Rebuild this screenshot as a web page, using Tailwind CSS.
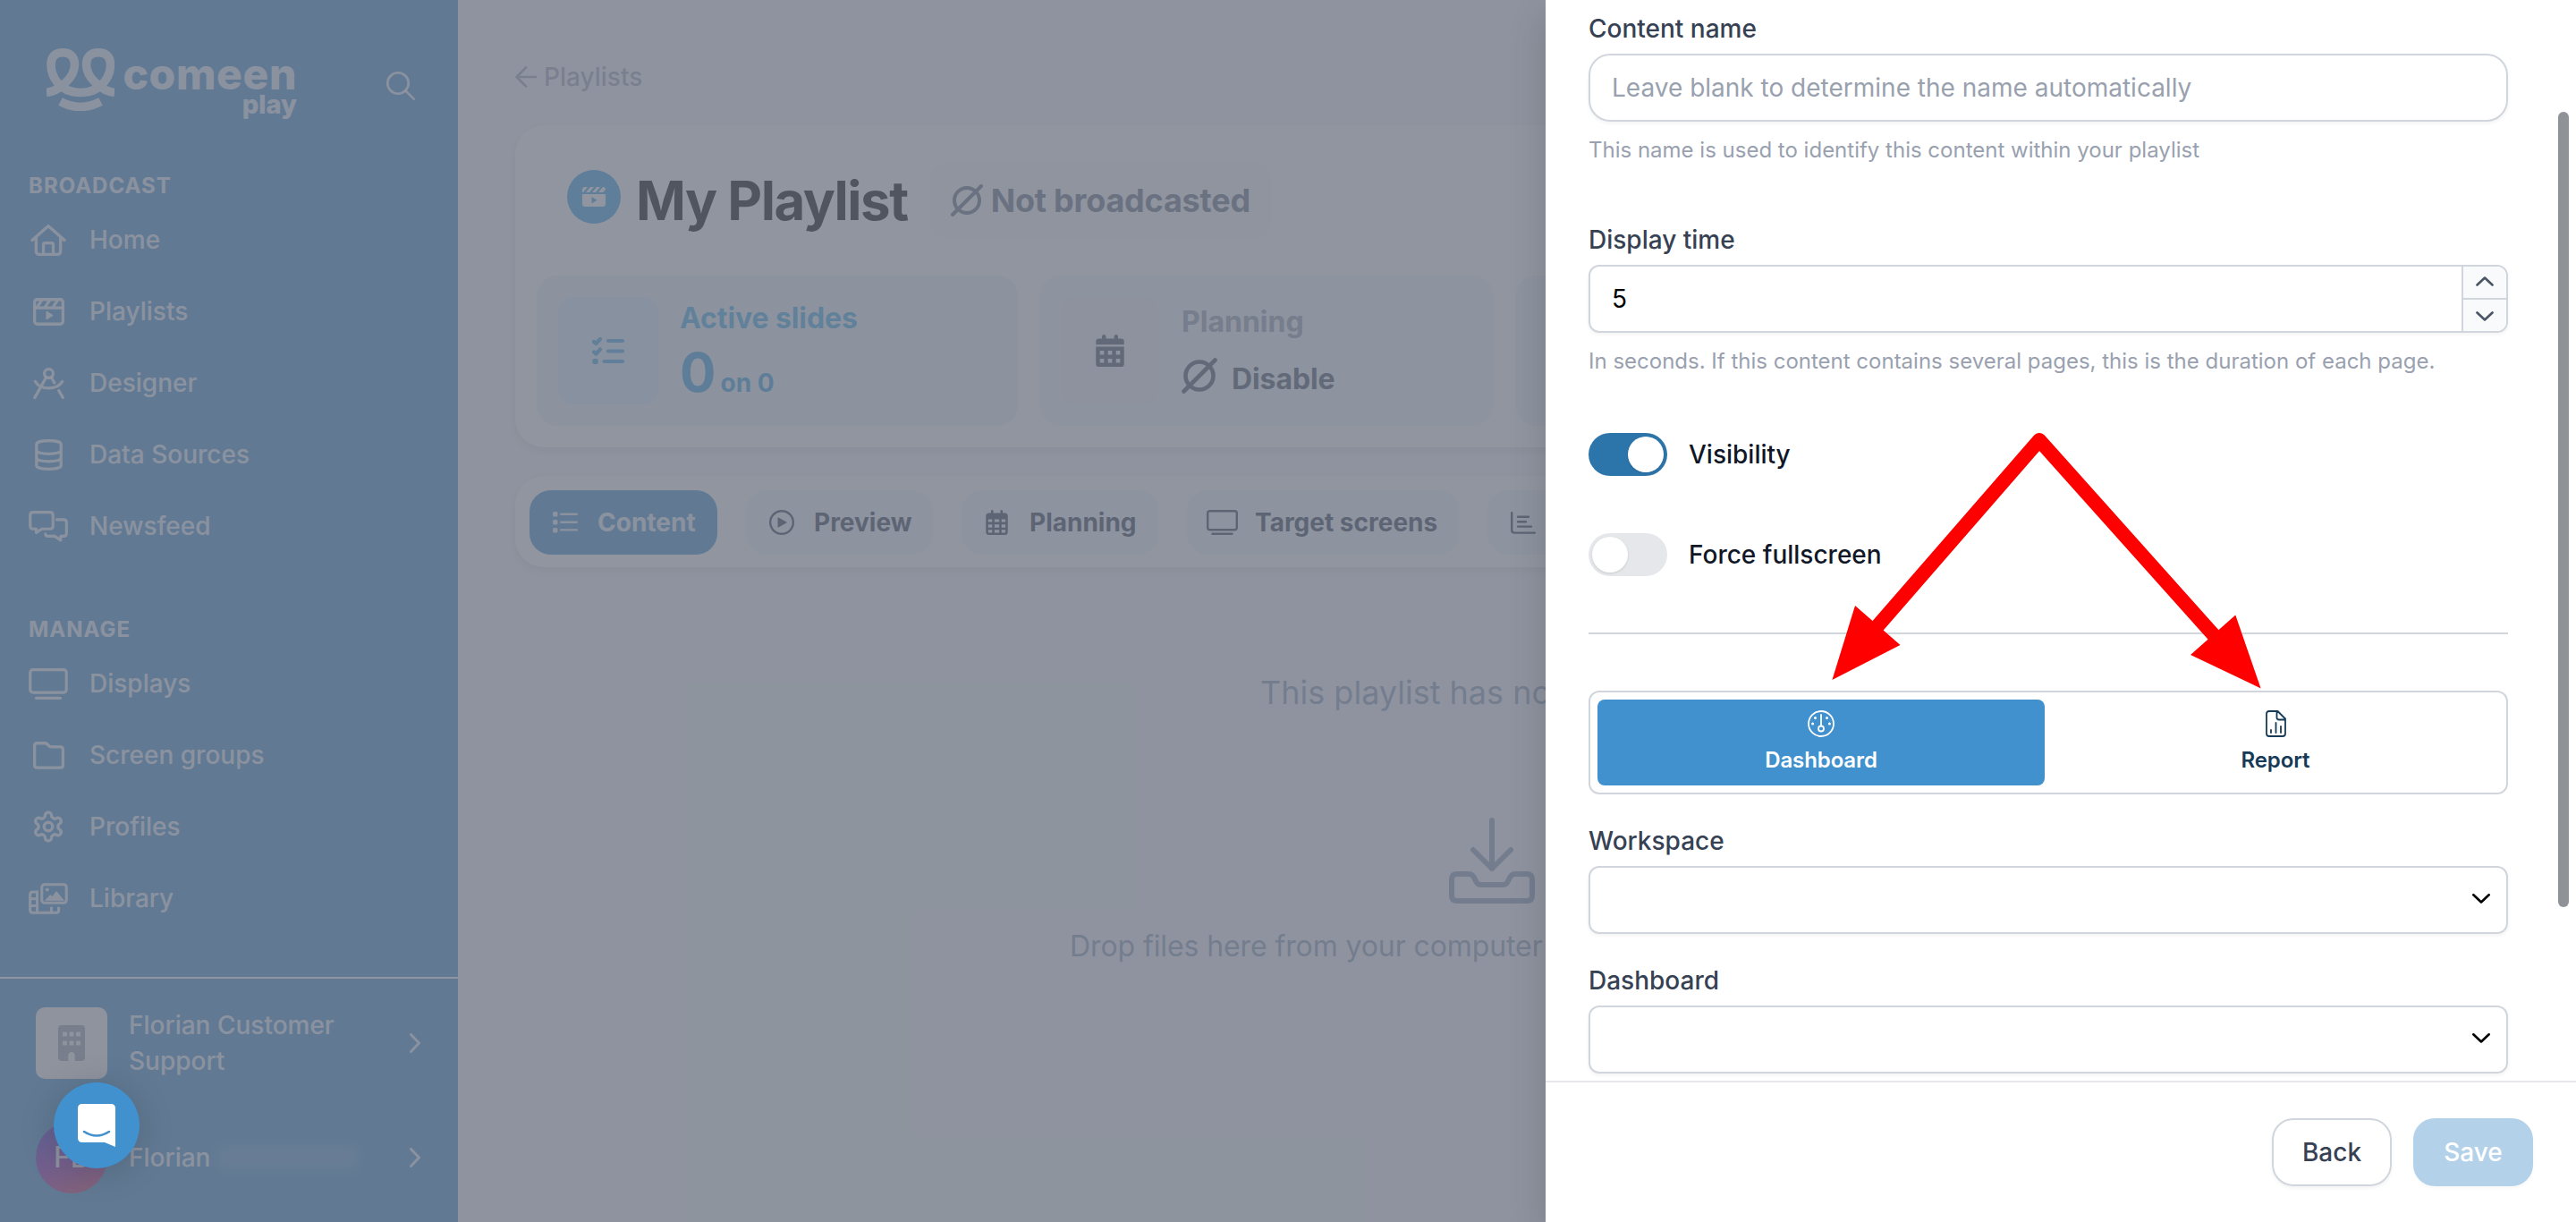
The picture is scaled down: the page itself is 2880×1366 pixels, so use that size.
<!DOCTYPE html>
<html lang="en">
<head>
    <meta charset="UTF-8" />
    <title>My Playlist - Comeen Play</title>
    <script src="https://cdn.jsdelivr.net/npm/@tailwindcss/browser@4"></script>
</head>
<body class="relative h-[1366px] w-[2880px] overflow-hidden bg-[#f7f8fa] font-['Inter',sans-serif] text-[28px] leading-10">
    <div class="flex h-full">

        <!-- Sidebar -->
        <aside class="flex w-[512px] shrink-0 flex-col bg-[#4590cc] font-medium text-white/90">
            <div class="flex h-[188px] items-start pl-[52px] pt-[54px]">
                <svg class="h-[70px] w-[76px] shrink-0" viewBox="0 0 76 70" fill="none" stroke="currentColor" stroke-width="9.5">
                    <path d="M0 49.5C14 48 31.5 33 31.5 18C31.5 9 26 4.8 18 4.8C10 4.8 5 9 5 18C5 31 14 49.5 38 49.5C62 49.5 71.5 31 71.5 18C71.5 9 66 4.8 58 4.8C50 4.8 44.5 9 44.5 18C44.5 33 62 48 76 49.5"/>
                    <path d="M15.5 59.5Q38 71.5 60.5 59.5"/>
                </svg>
                <div class="ml-2 mt-[10px] w-[196px] text-right font-extrabold">
                    <div class="text-[48px] leading-[38px] tracking-[0.6px]">comeen</div>
                    <div class="text-[29px] leading-[30px]">play</div>
                </div>
                <svg class="ml-[100px] mt-[26px] size-8" viewBox="0 0 32 32" fill="none" stroke="currentColor" stroke-width="2.6" stroke-linecap="round">
                    <circle cx="13" cy="13" r="11.7"/>
                    <path d="M21.5 21.5L30.7 30.7"/>
                </svg>
            </div>

            <h2 class="h-10 pl-8 text-2xl leading-[39px] font-bold tracking-[1px]">BROADCAST</h2>
            <nav class="mb-14">
                <a class="flex h-20 items-center gap-6 pl-8">
                    <span class="flex w-11 justify-center">
                        <svg class="h-[35px] w-10" viewBox="0 0 576 512" fill="none" stroke="currentColor" stroke-width="48" stroke-linecap="round" stroke-linejoin="round">
                            <path d="M24 256L288 24L552 256M88 206V432q0 56 56 56H432q56 0 56-56V206M208 484V328q0-26 26-26h108q26 0 26 26V484"/>
                        </svg>
                    </span>
                    Home
                </a>
                <a class="flex h-20 items-center gap-6 pl-8">
                    <span class="flex w-11 justify-center">
                        <svg class="size-[35px]" viewBox="0 0 512 512" fill="none" stroke="currentColor" stroke-width="48" stroke-linejoin="round">
                            <rect x="24" y="55" width="464" height="402" rx="44"/>
                            <path d="M24 192H488M66 182L140 66M196 182L270 66M326 182L400 66"/>
                            <path d="M220 252V376L318 314Z" fill="currentColor" stroke-width="16"/>
                        </svg>
                    </span>
                    Playlists
                </a>
                <a class="flex h-20 items-center gap-6 pl-8">
                    <span class="flex w-11 justify-center">
                        <svg class="size-[35px]" viewBox="0 0 512 512" fill="none" stroke="currentColor" stroke-width="48" stroke-linecap="round">
                            <circle cx="256" cy="96" r="72"/>
                            <path d="M214 158L28 488M298 158L348 246M422 376L486 488M36 226C120 372 392 372 478 226"/>
                        </svg>
                    </span>
                    Designer
                </a>
                <a class="flex h-20 items-center gap-6 pl-8">
                    <span class="flex w-11 justify-center">
                        <svg class="h-[35px] w-[31px]" viewBox="0 0 448 512" fill="none" stroke="currentColor" stroke-width="48">
                            <path d="M24 80C24 6 424 6 424 80V432C424 506 24 506 24 432ZM24 188C60 256 388 256 424 188M24 312C60 380 388 380 424 312"/>
                        </svg>
                    </span>
                    Data Sources
                </a>
                <a class="flex h-20 items-center gap-6 pl-8">
                    <span class="flex w-11 justify-center">
                        <svg class="h-[35px] w-11" viewBox="0 0 640 512" fill="none" stroke="currentColor" stroke-width="46" stroke-linecap="round" stroke-linejoin="round">
                            <path d="M70 24H350q46 0 46 46V250q0 46-46 46H216L124 356V296H70q-46 0-46-46V70q0-46 46-46Z"/>
                            <path d="M456 144H572q46 0 46 46V370q0 46-46 46H522V480L424 416H320q-46 0-46-40"/>
                        </svg>
                    </span>
                    Newsfeed
                </a>
            </nav>

            <h2 class="h-10 pl-8 text-2xl leading-[39px] font-bold tracking-[1px]">MANAGE</h2>
            <nav>
                <a class="flex h-20 items-center gap-6 pl-8">
                    <svg class="h-[35px] w-11" viewBox="0 0 640 512" fill="none" stroke="currentColor" stroke-width="46" stroke-linecap="round">
                        <rect x="24" y="24" width="592" height="372" rx="44"/>
                        <path d="M122 488H518"/>
                    </svg>
                    Displays
                </a>
                <a class="flex h-20 items-center gap-6 pl-8">
                    <span class="flex w-11 justify-center">
                        <svg class="size-[35px]" viewBox="0 0 512 512" fill="none" stroke="currentColor" stroke-width="48" stroke-linejoin="round">
                            <path d="M66 55H196q20 0 34 14L262 100q14 14 34 14H446q42 0 42 42V414q0 42-42 42H66q-42 0-42-42V97q0-42 42-42Z"/>
                        </svg>
                    </span>
                    Screen groups
                </a>
                <a class="flex h-20 items-center gap-6 pl-8">
                    <span class="flex w-11 justify-center">
                        <svg class="size-[38px]" viewBox="0 0 24 24" fill="none" stroke="currentColor" stroke-width="2.1" stroke-linecap="round" stroke-linejoin="round">
                            <path d="M12.22 2h-.44a2 2 0 0 0-2 2v.18a2 2 0 0 1-1 1.73l-.43.25a2 2 0 0 1-2 0l-.15-.08a2 2 0 0 0-2.73.73l-.22.38a2 2 0 0 0 .73 2.73l.15.1a2 2 0 0 1 1 1.72v.51a2 2 0 0 1-1 1.74l-.15.09a2 2 0 0 0-.73 2.73l.22.38a2 2 0 0 0 2.73.73l.15-.08a2 2 0 0 1 2 0l.43.25a2 2 0 0 1 1 1.73V20a2 2 0 0 0 2 2h.44a2 2 0 0 0 2-2v-.18a2 2 0 0 1 1-1.73l.43-.25a2 2 0 0 1 2 0l.15.08a2 2 0 0 0 2.73-.73l.22-.39a2 2 0 0 0-.73-2.73l-.15-.08a2 2 0 0 1-1-1.74v-.5a2 2 0 0 1 1-1.74l.15-.09a2 2 0 0 0 .73-2.73l-.22-.38a2 2 0 0 0-2.73-.73l-.15.08a2 2 0 0 1-2 0l-.43-.25a2 2 0 0 1-1-1.73V4a2 2 0 0 0-2-2z"/>
                            <circle cx="12" cy="12" r="3"/>
                        </svg>
                    </span>
                    Profiles
                </a>
                <a class="flex h-20 items-center gap-6 pl-8">
                    <svg class="h-[35px] w-11" viewBox="0 0 640 512" fill="none" stroke="currentColor" stroke-width="44" stroke-linejoin="round">
                        <rect x="214" y="24" width="402" height="302" rx="44"/>
                        <path d="M270 286L350 196L386 226L452 140L574 286Z" fill="currentColor" stroke-width="10"/>
                        <circle cx="302" cy="110" r="30" fill="currentColor" stroke="none"/>
                        <path d="M160 148H66q-44 0-44 44V444q0 44 44 44H448q42 0 42-42V392M138 148V488M24 258H138M24 374H138M370 392V488"/>
                    </svg>
                    Library
                </a>
            </nav>

            <!-- Account -->
            <div class="mt-auto h-[274px] border-t-2 border-white/95 pl-10 pr-[42px] pt-8">
                <div class="flex h-20 items-center">
                    <span class="flex size-20 items-center justify-center rounded-[10px] bg-[#f5f5f8] text-[#a0a3b0]">
                        <svg class="h-10 w-[30px]" viewBox="0 0 384 512" fill="currentColor">
                            <path fill-rule="evenodd" d="M48 0C21.5 0 0 21.5 0 48V464c0 26.5 21.5 48 48 48h96V432c0-26.5 21.5-48 48-48s48 21.5 48 48v80h96c26.5 0 48-21.5 48-48V48c0-26.5-21.5-48-48-48H48zM80 224h32q16 0 16 16v32q0 16-16 16H80q-16 0-16-16v-32q0-16 16-16zm96 0h32q16 0 16 16v32q0 16-16 16h-32q-16 0-16-16v-32q0-16 16-16zm96 0h32q16 0 16 16v32q0 16-16 16h-32q-16 0-16-16v-32q0-16 16-16zM80 96h32q16 0 16 16v32q0 16-16 16H80q-16 0-16-16v-32q0-16 16-16zm96 0h32q16 0 16 16v32q0 16-16 16h-32q-16 0-16-16v-32q0-16 16-16zm96 0h32q16 0 16 16v32q0 16-16 16h-32q-16 0-16-16v-32q0-16 16-16z"/>
                        </svg>
                    </span>
                    <span class="ml-6 w-[240px]">Florian Customer Support</span>
                    <svg class="ml-auto h-[22px] w-3" viewBox="0 0 12 22" fill="none" stroke="currentColor" stroke-width="3" stroke-linecap="round" stroke-linejoin="round"><path d="M1.5 1.5L10.5 11L1.5 20.5"/></svg>
                </div>
                <div class="mt-12 flex h-20 items-center">
                    <span class="flex size-20 items-center rounded-full bg-linear-[160deg] from-[#5a2fc0] from-20% via-[#8a28b8] via-50% to-[#d43a58] pl-5 text-[32px]">FB</span>
                    <span class="ml-6">Florian</span>
                    <span class="ml-2 h-7 w-[158px] bg-white/15 blur-[6px]"></span>
                    <svg class="ml-auto h-[22px] w-3" viewBox="0 0 12 22" fill="none" stroke="currentColor" stroke-width="3" stroke-linecap="round" stroke-linejoin="round"><path d="M1.5 1.5L10.5 11L1.5 20.5"/></svg>
                </div>
            </div>
        </aside>

        <!-- Main content -->
        <main class="flex min-w-0 flex-1 flex-col pl-16 pr-[120px] pt-[66px]">
            <a class="flex h-10 items-center gap-2 font-medium text-[#a9a9bd]">
                <svg class="size-6" viewBox="0 0 24 24" fill="none" stroke="currentColor" stroke-width="2.6" stroke-linecap="round" stroke-linejoin="round"><path d="M23 12H1.5M12 1.5L1.5 12L12 22.5"/></svg>
                Playlists
            </a>

            <section class="mt-[34px] h-[360px] rounded-[32px] bg-white px-6 pt-10 shadow-[0_4px_12px_rgba(0,0,0,0.1)]">
                <div class="flex h-[88px] items-center pl-[34px]">
                    <span class="-mt-2 flex size-[60px] items-center justify-center rounded-full bg-[#38a4e3] text-white">
                        <svg class="h-[22px] w-[26px]" viewBox="0 0 26 22" fill="currentColor">
                            <path d="M3 0H6L1 6H0V3Q0 0 3 0ZM9 0H13L8 6H4ZM16 0H20L15 6H11ZM23 0Q26 0 26 3L23 6H18ZM0 8H26V19Q26 22 23 22H3Q0 22 0 19ZM10.5 11V18.5L16.5 14.8Z" fill-rule="evenodd"/>
                        </svg>
                    </span>
                    <h1 class="ml-[17px] whitespace-nowrap text-[60px] font-bold leading-[72px] tracking-[-1.5px] text-black">My Playlist</h1>
                    <span class="ml-6 flex h-[88px] items-center gap-[9px] rounded-3xl bg-[#fafbfb] px-6 text-[36px] font-bold tracking-[-0.2px] text-gray-500">
                        <svg class="size-9" viewBox="0 0 36 36" fill="none" stroke="currentColor" stroke-width="4" stroke-linecap="round"><circle cx="18" cy="18" r="14"/><path d="M2 34L34 2"/></svg>
                        Not broadcasted
                    </span>
                </div>

                <div class="mt-10 flex h-[168px] gap-6 font-bold">
                    <div class="flex w-[538px] shrink-0 rounded-3xl bg-[#eef6fa] p-6">
                        <span class="flex h-[120px] w-28 items-center justify-center rounded-2xl bg-[#e0effe] text-[#44a6e0]">
                            <svg class="h-[30px] w-9" viewBox="0 0 36 30" fill="none" stroke="currentColor" stroke-width="4.2" stroke-linecap="round" stroke-linejoin="round">
                                <path d="M18 4H34M18 15.5H34M13.5 27H34M2 5L4.5 7L9 2M2 16.5L4.5 18.5L9 13.5"/>
                                <circle cx="3.5" cy="27" r="3.3" fill="currentColor" stroke="none"/>
                            </svg>
                        </span>
                        <div class="ml-6">
                            <div class="h-[48px] text-[32px] leading-[48px] tracking-[-0.1px] text-[#44b0e8]">Active slides</div>
                            <div class="whitespace-nowrap text-[60px] leading-[72px] text-[#369fdf]">0<span class="ml-[5px] text-[28px]">on 0</span></div>
                        </div>
                    </div>
                    <div class="flex w-[508px] shrink-0 rounded-3xl bg-[#f1f5f9] p-6">
                        <span class="flex h-[120px] w-[110px] items-center justify-center rounded-2xl bg-[#f4f4f6] text-gray-600">
                            <svg class="h-9 w-8" viewBox="0 0 448 512" fill="currentColor">
                                <path fill-rule="evenodd" d="M96 32q0-32 32-32t32 32V64H288V32q0-32 32-32t32 32V64h48q48 0 48 48v48H0V112q0-48 48-48H96ZM0 192H448V464q0 48-48 48H48q-48 0-48-48ZM64 256v64h64v-64zm128 0v64h64v-64zm128 0v64h64v-64zM64 384v64h64v-64zm128 0v64h64v-64zm128 0v64h64v-64z"/>
                            </svg>
                        </span>
                        <div class="ml-[25px] pt-1">
                            <div class="h-[48px] text-[32px] leading-[48px] text-gray-400">Planning</div>
                            <div class="flex items-start gap-4 pt-4 text-[32px] tracking-[-0.1px] text-gray-600">
                                <svg class="size-10" viewBox="0 0 40 40" fill="none" stroke="currentColor" stroke-width="4.6" stroke-linecap="round"><circle cx="20" cy="20" r="15.5"/><path d="M2.5 37.5L37.5 2.5"/></svg>
                                <span class="pt-1">Disable</span>
                            </div>
                        </div>
                    </div>
                    <div class="flex-1 rounded-3xl bg-[#f1f5f9]"></div>
                </div>
            </section>

            <!-- Tabs -->
            <div class="mt-8 flex h-[102px] items-start gap-8 rounded-[32px] bg-white px-4 pt-4 font-bold text-gray-700 shadow-[0_4px_12px_rgba(0,0,0,0.1)]">
                <a class="flex h-[72px] w-[210px] shrink-0 items-center gap-[22px] rounded-3xl bg-[#4590cc] pl-[26px] text-white/90">
                    <svg class="h-6 w-7" viewBox="0 0 28 24" fill="currentColor"><rect width="5.5" height="5.5" rx="1.5"/><rect y="9" width="5.5" height="5.5" rx="1.5"/><rect y="18" width="5.5" height="5.5" rx="1.5"/><rect x="8" y="1.6" width="20" height="2.4" rx="1.2"/><rect x="8" y="10.5" width="20" height="2.4" rx="1.2"/><rect x="8" y="19.2" width="20" height="2.4" rx="1.2"/></svg>
                    Content
                </a>
                <a class="flex h-[72px] w-[209px] shrink-0 items-center gap-[22px] rounded-3xl bg-[#f1f5f9] pl-[26px]">
                    <svg class="size-7" viewBox="0 0 28 28"><circle cx="14" cy="14" r="12.8" fill="none" stroke="currentColor" stroke-width="2.4"/><path d="M10 8.8V19.2L19.3 14Z" fill="currentColor" stroke="currentColor" stroke-linejoin="round"/></svg>
                    Preview
                </a>
                <a class="flex h-[72px] w-[220px] shrink-0 items-center gap-6 rounded-3xl bg-[#f1f5f9] pl-[27px]">
                    <svg class="h-7 w-[25px]" viewBox="0 0 448 512" fill="currentColor">
                        <path fill-rule="evenodd" d="M104 24q0-24 24-24t24 24V64H296V24q0-24 24-24t24 24V64h40q64 0 64 64V448q0 64-64 64H64q-64 0-64-64V128q0-64 64-64h40ZM48 192v56h80v-56zm128 0v56h96v-56zm144 0v56h80v-56zM48 296v64h80v-64zm128 0v64h96v-64zm144 0v64h80v-64zM48 408v40q0 16 16 16h64v-56zm128 0v56h96v-56zm144 0v56h64q16 0 16-16v-40z"/>
                    </svg>
                    Planning
                </a>
                <a class="flex h-[72px] w-[304px] shrink-0 items-center gap-[19px] rounded-3xl bg-[#f1f5f9] pl-[22px]">
                    <svg class="h-7 w-[35px]" viewBox="0 0 35 28" fill="none" stroke="currentColor" stroke-width="2.4" stroke-linecap="round"><rect x="1.2" y="1.2" width="32.6" height="21" rx="2.5"/><path d="M6.5 26.8H28.5"/></svg>
                    Target screens
                </a>
                <a class="flex h-[72px] flex-1 items-center rounded-3xl bg-[#f1f5f9] pl-[26px]">
                    <svg class="h-[25px] w-7" viewBox="0 0 28 25" fill="none" stroke="currentColor" stroke-width="2.4" stroke-linecap="round"><path d="M1.2 1.2V20.5Q1.2 23.6 4.2 23.6H26.8M8 5.8H20M8 11.2H17M8 16.6H23"/></svg>
                </a>
            </div>

            <!-- Empty state -->
            <div class="flex flex-col items-start whitespace-nowrap text-slate-400">
                <p class="ml-[833px] mt-[116px] text-[36px] leading-[48px]">This playlist has no content</p>
                <svg class="ml-[1044px] mt-[116px] size-24" viewBox="0 0 96 96" fill="none" stroke="currentColor" stroke-width="6" stroke-linecap="round" stroke-linejoin="round">
                    <path d="M48 3V57M27 36L48 57L69 36"/>
                    <path d="M9 63H22Q26 63 28 67L30 71Q32 75 35 75H61Q64 75 66 71L68 67Q70 63 74 63H87Q93 63 93 69V87Q93 93 87 93H9Q3 93 3 87V69Q3 63 9 63Z"/>
                </svg>
                <p class="ml-[620px] mt-[28px] text-[32px] tracking-[-0.1px]">Drop files here from your computer</p>
            </div>
        </main>
    </div>

    <div class="absolute inset-0 bg-[#6b7280]/75"></div>

    <!-- Content drawer -->
    <div class="absolute inset-y-0 right-0 flex w-[1152px] flex-col bg-white font-medium text-gray-700 shadow-[0_16px_40px_rgba(0,0,0,0.15)]">
        <div class="relative h-[1208px] px-12 pt-3">
            <label class="block h-10">Content name</label>
            <div class="mt-2 flex h-[76px] w-[1028px] items-center rounded-3xl border-2 border-gray-300 pl-6 font-normal text-gray-400 shadow-[0_2px_4px_rgba(0,0,0,0.05)]">Leave blank to determine the name automatically</div>
            <p class="mt-3 h-10 text-[24px] font-normal leading-10 text-gray-400">This name is used to identify this content within your playlist</p>

            <label class="mt-[60px] block h-10">Display time</label>
            <div class="mt-2 flex h-[76px] w-[1028px] overflow-hidden rounded-xl border-2 border-gray-300 shadow-[0_2px_4px_rgba(0,0,0,0.05)]">
                <span class="flex flex-1 items-center pl-6 font-normal text-black">5</span>
                <div class="flex w-[50px] flex-col border-l-2 border-gray-300 bg-gray-50 text-gray-600">
                    <span class="flex h-[37px] items-center justify-center border-b-2 border-gray-300 pb-0.5"><svg class="h-[11px] w-5" viewBox="0 0 20 11" fill="none" stroke="currentColor" stroke-width="2.6" stroke-linecap="round" stroke-linejoin="round"><path d="M1.5 9.5L10 1.5L18.5 9.5"/></svg></span>
                    <span class="flex h-[35px] items-center justify-center pt-0.5"><svg class="h-[11px] w-5" viewBox="0 0 20 11" fill="none" stroke="currentColor" stroke-width="2.6" stroke-linecap="round" stroke-linejoin="round"><path d="M1.5 1.5L10 9.5L18.5 1.5"/></svg></span>
                </div>
            </div>
            <p class="mt-3 h-10 text-[24px] font-normal leading-10 text-gray-400">In seconds. If this content contains several pages, this is the duration of each page.</p>

            <div class="mt-[60px] flex h-12 items-center gap-6 text-gray-900">
                <span class="flex h-12 w-[88px] justify-end rounded-full bg-[#2c75ab] p-1"><span class="size-10 rounded-full bg-white shadow"></span></span>
                Visibility
            </div>
            <div class="mt-16 flex h-12 items-center gap-6 text-gray-900">
                <span class="flex h-12 w-[88px] rounded-full bg-gray-200 p-1"><span class="size-10 rounded-full bg-white shadow"></span></span>
                Force fullscreen
            </div>

            <hr class="mt-[63px] w-[1028px] border-t-2 border-gray-300">

            <div class="mt-[63px] flex h-[116px] w-[1028px] rounded-xl border-2 border-gray-300 p-2 text-2xl font-semibold tracking-[-0.1px]">
                <div class="flex w-[500px] flex-col items-center rounded-lg bg-[#4091ce] pt-3 text-white">
                    <svg class="size-[30px]" viewBox="0 0 30 30" fill="none" stroke="currentColor" stroke-width="1.8"><circle cx="15" cy="15" r="14"/><circle cx="15" cy="20.5" r="3"/><path d="M15 5V17.5" stroke-linecap="round"/><g fill="currentColor" stroke="none"><circle cx="8.5" cy="8.5" r="1.5"/><circle cx="21.5" cy="8.5" r="1.5"/><circle cx="5.6" cy="15" r="1.5"/><circle cx="24.4" cy="15" r="1.5"/></g></svg>
                    <span class="mt-1.5 leading-10">Dashboard</span>
                </div>
                <div class="flex flex-1 flex-col items-center pl-2 pt-3 text-[#173b57]">
                    <svg class="h-[30px] w-[23px]" viewBox="0 0 23 30" fill="none" stroke="currentColor" stroke-width="1.8" stroke-linecap="round" stroke-linejoin="round"><path d="M4 1H13.5L22 9.5V26Q22 29 19 29H4Q1 29 1 26V4Q1 1 4 1ZM12.5 1.5V8Q12.5 10.5 15 10.5H21.5M6 22V25M11.5 14V25M17 18V25"/></svg>
                    <span class="mt-1.5 leading-10">Report</span>
                </div>
            </div>

            <label class="mt-8 block h-10">Workspace</label>
            <div class="mt-2 flex h-[76px] w-[1028px] items-center justify-end rounded-xl border-2 border-gray-300 pr-[18px] text-black shadow-[0_2px_4px_rgba(0,0,0,0.05)]">
                <svg class="-mt-1 h-[11px] w-5" viewBox="0 0 20 11" fill="none" stroke="currentColor" stroke-width="2.6" stroke-linecap="round" stroke-linejoin="round"><path d="M1.3 1.3L10 9.5L18.7 1.3"/></svg>
            </div>
            <label class="mt-8 block h-10">Dashboard</label>
            <div class="mt-2 flex h-[76px] w-[1028px] items-center justify-end rounded-xl border-2 border-gray-300 pr-[18px] text-black shadow-[0_2px_4px_rgba(0,0,0,0.05)]">
                <svg class="-mt-1 h-[11px] w-5" viewBox="0 0 20 11" fill="none" stroke="currentColor" stroke-width="2.6" stroke-linecap="round" stroke-linejoin="round"><path d="M1.3 1.3L10 9.5L18.7 1.3"/></svg>
            </div>

            <!-- Scrollbar thumb -->
            <div class="absolute right-2 top-[125px] h-[889px] w-3 rounded-full bg-[#8f9398]"></div>
        </div>

        <div class="flex flex-1 items-start justify-end gap-6 border-t-2 border-gray-200 pr-12 pt-10">
            <button class="h-[76px] w-[134px] rounded-3xl border-2 border-gray-300 shadow-[0_2px_4px_rgba(0,0,0,0.05)]">Back</button>
            <button class="h-[76px] w-[134px] rounded-3xl bg-[#b3d2ea] text-white shadow-[0_2px_4px_rgba(0,0,0,0.03)]">Save</button>
        </div>
    </div>

    <!-- Annotation arrows -->
    <svg class="absolute left-[2040px] top-[480px] h-[300px] w-[500px]" viewBox="2040 480 500 300">
        <path d="M2099 700L2280 492L2475 710" fill="none" stroke="#f00" stroke-width="16" stroke-linejoin="round"/>
        <path d="M2074 677L2124.5 721L2048.4 760ZM2499.3 687.5L2449 732L2527.6 769.4Z" fill="#f00"/>
    </svg>

    <!-- Chat launcher -->
    <div class="absolute left-[60px] top-[1210px] flex size-24 items-center justify-center rounded-full bg-[#4091ce] shadow-[0_4px_40px_rgba(0,0,0,0.15)]">
        <svg class="h-12 w-[42px]" viewBox="0 0 42 48"><path d="M5 0H37Q42 0 42 5V48L30 43H5Q0 43 0 38V5Q0 0 5 0Z" fill="#fff"/><path d="M7 31Q21 40 35 31" fill="none" stroke="#4091ce" stroke-width="2.6" stroke-linecap="round"/></svg>
    </div>
</body>
</html>
